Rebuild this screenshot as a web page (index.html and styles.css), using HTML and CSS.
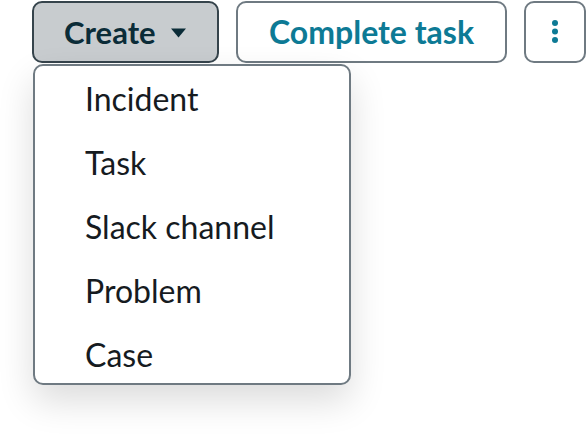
FILE: index.html
```html
<!DOCTYPE html>
<html lang="en">
<head>
<meta charset="utf-8">
<title>Actions</title>
<link rel="stylesheet" href="styles.css">
</head>
<body>
<div class="page">
  <div class="toolbar">
    <button class="btn btn-create" type="button">
      <span>Create</span>
      <svg class="caret" width="15" height="10" viewBox="0 0 15 10" aria-hidden="true"><path d="M0 0.5 H15 L7.5 9.5 Z" fill="currentColor"/></svg>
    </button>
    <button class="btn btn-outline" type="button">Complete task</button>
    <button class="btn btn-outline btn-icon" type="button" aria-label="More actions">
      <svg width="8" height="28" viewBox="0 0 8 28" aria-hidden="true">
        <circle cx="4" cy="5" r="3" fill="currentColor"/>
        <circle cx="4" cy="13.5" r="3" fill="currentColor"/>
        <circle cx="4" cy="22" r="3" fill="currentColor"/>
      </svg>
    </button>
  </div>
  <ul class="dropdown">
    <li class="item">Incident</li>
    <li class="item">Task</li>
    <li class="item">Slack channel</li>
    <li class="item">Problem</li>
    <li class="item">Case</li>
  </ul>
</div>
</body>
</html>
```

FILE: styles.css
```css
html, body {
  margin: 0;
  padding: 0;
  background: #ffffff;
}

body {
  font-family: Lato, "Open Sans", "Liberation Sans", sans-serif;
}

.page {
  box-sizing: border-box;
  min-height: 442px;
  display: flex;
  flex-direction: column;
  align-items: flex-start;
  padding: 1px 0 0 32px;
}

.toolbar {
  display: flex;
  align-items: flex-start;
  gap: 17px;
}

.btn {
  flex: none;
  box-sizing: border-box;
  height: 62px;
  margin: 0;
  border: 2px solid #6f7a82;
  border-radius: 10px;
  background: #ffffff;
  font-family: Lato, "Open Sans", "Liberation Sans", sans-serif;
  font-weight: 700;
  font-size: 32px;
  line-height: 1;
  padding: 0 31px;
  display: flex;
  align-items: center;
  white-space: nowrap;
  cursor: pointer;
}

.btn-create {
  width: 187px;
  font-size: 31px;
  background: #c8cccf;
  border-color: #36444c;
  color: #0b2c38;
  gap: 15px;
  padding: 0 0 0 30px;
}

.caret {
  display: block;
  margin-top: 1px;
}

.btn-outline {
  color: #0d7a95;
}

.btn-icon {
  width: 62px;
  padding: 0;
  justify-content: center;
}

.btn-icon svg {
  display: block;
}

.dropdown {
  box-sizing: border-box;
  width: 318px;
  height: 321px;
  overflow: hidden;
  margin: 1px 0 0 1px;
  padding: 1px 0 0 0;
  list-style: none;
  background: #ffffff;
  border: 2px solid #6f7a82;
  border-radius: 10px;
  box-shadow: 0 16px 36px rgba(0, 0, 0, 0.14);
}

.item {
  height: 64px;
  line-height: 64px;
  padding-left: 50px;
  font-size: 32px;
  font-weight: 400;
  color: #161b1f;
  white-space: nowrap;
}
```
